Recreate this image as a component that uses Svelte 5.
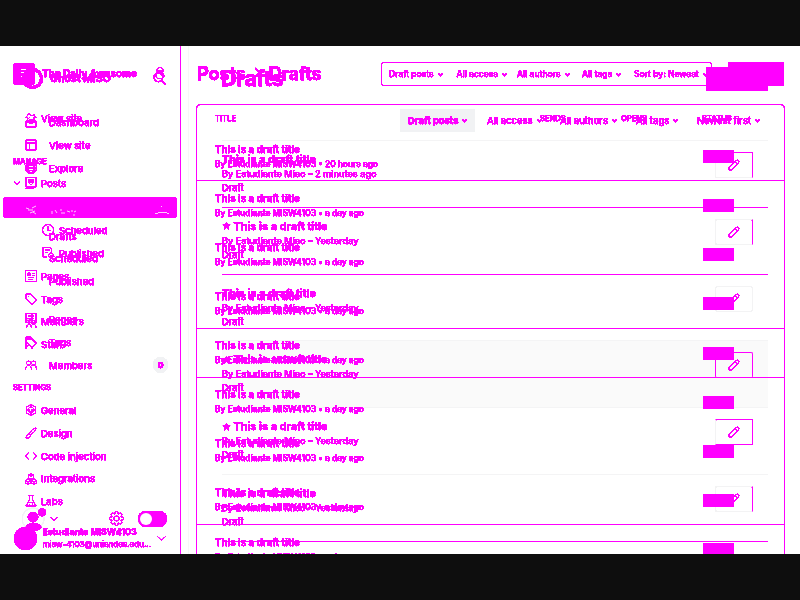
<script>
  const icons = {
    search: 'M10 3a7 7 0 1 0 .1 0M15.5 15.5L22 22',
    person: 'M12 1a6 6 0 1 0 .1 0M5 14a8 7 0 1 0 14 0M5 14c1-4 13-4 14 0M8 8h8',
    home2: 'M1 12L8 3l6 5 4-3 4 7M5 11v10h13V11M9 15h6',
    board: 'M2 10h20v12H2zM2 10l7-7M9 10v5h6v-5',
    site: 'M2 2h20v20H2zM2 8h20M9 8v14',
    globe: 'M12 1a11 11 0 1 0 .1 0M1 12h22M12 1c-8 7-8 15 0 22M12 1c8 7 8 15 0 22M3 7h18M3 17h18',
    posts: 'M2 1h20v19H2zM7 5h10v6l-5 5-5-5zM9 7h6M9 9h6M9 11h6M1 23h17',
    clock: 'M12 1a11 11 0 1 0 .1 0M12 5v8h5',
    pub: 'M2 1h14l3 4v5M2 1v19h8M6 6h9M6 11h6M18 12a5 5 0 1 0 .1 0M15 18l2 2 4-4',
    page: 'M1 1h22v22H1zM6 6h4v5H6zM14 7h5M14 11h5M6 15h12M6 19h9',
    tag: 'M2 2h9l12 12-9 9L2 11zM7 6v2',
    people: 'M7 4a4 4 0 1 0 .1 0M17 4a4 4 0 1 0 .1 0M1 21c0-11 12-11 12 0M12 14c5-5 11-1 11 7',
    members: 'M2 9a4 4 0 1 0 8 0 4 4 0 1 0-8 0M17 9a4 4 0 1 0 .1 0M3 23c2-9 9-9 10 0M13 19c3-5 8-4 9 4M4 14l8-8',
    staff: 'M4 2h9l8 9-7 8-6-6M2 3v18M2 21c0-8 12-8 12 0',
    pages: 'M2 1h20v18H2zM7 6h10M7 11h10M14 1v18M5 15h12',
    gear: 'M12 8a4 4 0 1 0 .1 0M10 1h4l1 4 3-2 3 3-2 3 4 1v4l-4 1 2 3-3 3-3-2-1 4h-4l-1-4-3 2-3-3 2-3-4-1v-4l4-1-2-3 3-3 3 2z',
    hex: 'M12 1l9 5v12l-9 5-9-5V6zM12 6a6 6 0 1 0 .1 0M9 10v3M14 10v3M9 15h6',
    brush: 'M22 2l-6 2-8 9 3 3 9-8zM8 14c-5 0-3 5-7 7 5 3 10 0 10-5',
    code: 'M8 4l-7 8 7 8M16 4l7 8-7 8',
    cubes: 'M12 1l5 3v6l-5 3-5-3V4zM6 12l5 3v5l-5 3-5-3v-5zM18 12l5 3v5l-5 3-5-3v-5zM7 4l5 3 5-3M1 15l5 3 5-3M13 15l5 3 5-3',
    flask: 'M7 1h10M9 1v8L2 22h20L15 9V1M6 15h12M9 19h1M14 18h1',
    pencil: 'M19 2l3 3-3 5L7 22H2v-5L14 5zM14 5l4 4',
    chev: 'M4 8l8 8 8-8'
  };

  const topNav = [['board', 'Dashboard'], ['site', 'View site'], ['globe', 'Explore']];
  const midNav = ['Drafts', 'Scheduled', 'Published'];
  const lowNav = [['pages', 'Pages'], ['tag', 'Tags'], ['people', 'Members']];
  const subNav = [['clock', 'Scheduled'], ['pub', 'Published']];
  const manage = [['page', 'Pages'], ['tag', 'Tags'], ['members', 'Members'], ['staff', 'Staff']];
  const settings = [['hex', 'General'], ['brush', 'Design'], ['code', 'Code injection'], ['cubes', 'Integrations'], ['flask', 'Labs']];

  const oldRows = ['20 hours ago', ...Array(8).fill('a day ago')];
  const softLines = [1, 2, 5, 6];
  const newRows = [
    { when: '2 minutes ago', star: false, box: 't r', line: 'strong' },
    { when: 'Yesterday', star: true, box: 'r', line: 'strong' },
    { when: 'Yesterday', star: false, box: '', line: '' },
    { when: 'Yesterday', star: true, box: 't r l', line: '', hover: true },
    { when: 'Yesterday', star: true, box: 't r b', line: '' },
    { when: 'Yesterday', star: false, box: 'r', line: 'strong' }
  ];
</script>

{#snippet icon(name, size = 12, w = 1.7)}
  <svg width={size} height={size} viewBox="0 0 24 24" fill="none" stroke="#f0f" stroke-width={w}><path d={icons[name]} /></svg>
{/snippet}

<svg class="defs" width="0" height="0">
  <filter id="hard" x="0" y="0" width="100%" height="100%" color-interpolation-filters="sRGB">
    <feComponentTransfer><feFuncA type="linear" slope="20" intercept="-2.5" /></feComponentTransfer>
  </filter>
</svg>

<div class="screen">
  <div class="stage">
    <div class="layer b">
      <aside>
        <div class="head"><i class="ring"></i><b>Ghost MISO</b>{@render icon('search', 15, 1.7)}</div>
        {#each topNav as [ic, label]}<div class="nav">{@render icon(ic)}<span>{label}</span></div>{/each}
        <div class="nav hidden-row"></div>
        {#each midNav as label}<div class="nav sub"><span>{label}</span></div>{/each}
        <div class="gap"></div>
        {#each lowNav as [ic, label]}
          <div class="nav">{@render icon(ic)}<span>{label}</span>{#if label === 'Members'}<em><b>0</b></em>{/if}</div>
        {/each}
        <div class="foot">
          <svg class="face" width="28" height="34" viewBox="0 0 28 34"><circle cx="11" cy="17" r="11" fill="none" stroke="#f3f3f5" /><circle cx="11" cy="15" r="5.300" /><ellipse cx="11.500" cy="25" rx="8" ry="4" /><circle cx="20" cy="10.300" r="4" /></svg>
          <span class="fchev">{@render icon('chev', 10, 2)}</span>
          <span class="fgear">{@render icon('gear', 15, 1.2)}</span>
          <span class="toggle"><i></i></span>
        </div>
      </aside>
      <main>
        <header><h1>Drafts</h1><button aria-label="New post"></button></header>
        <div class="filters">
          <span class="on"><b>Draft posts</b> {@render icon('chev', 7, 4)}</span>
          <span class="f2">All access {@render icon('chev', 7, 4)}</span>
          <span class="f3">All authors {@render icon('chev', 7, 4)}</span>
          <span class="f4">All tags {@render icon('chev', 7, 4)}</span>
          <span class="f5">Newest first {@render icon('chev', 7, 4)}</span>
        </div>
        {#each newRows as r}
          <div class="row {r.line}" class:hover={r.hover}>
            <div class="txt">
              <h3>{#if r.star}<svg width="9" height="9" viewBox="0 0 24 24"><path fill="#f0f" d="M12 1l3 8h8l-6 5 2 9-7-5-7 5 2-9-6-5h8z" /></svg>{/if}<span>This is a draft title</span></h3>
              <p>By Estudiante Miso – {r.when}</p>
              <small>Draft</small>
            </div>
            <div class="edit {r.box}">{@render icon('pencil', 12, 2)}</div>
          </div>
        {/each}
      </main>
    </div>

    <div class="layer a">
      <aside>
        <div class="head">
          <svg class="logo" width="22" height="22" viewBox="0 0 22 22"><path fill="#f0f" fill-rule="evenodd" d="M2 0h18l2 2v18l-2 2H2l-2-2V2zM8 6v1h5v-1zM8 9v1h3v-1zM8 13v1h2v-1z" /></svg>
          <b>The Daily Awesome</b>{@render icon('person', 12, 1.500)}
        </div>
        <div class="nav">{@render icon('home2')}<span>View site</span></div>
        <div class="section">MANAGE</div>
        <div class="nav posts"><i>{@render icon('chev', 8, 3)}</i>{@render icon('posts')}<span>Posts</span></div>
        <div class="bar">
          <svg width="174" height="21" viewBox="0 0 174 21" fill="none" stroke="#fff" stroke-width=".8"><path d="M23 11l3 1M25 13h5M29 11l4 -2M27 16l5-2M30 15l3 2M49 14v3M52 13l2 3M57 13h2M58 16h4M64 14l3 1M69 13v2M71 15l2-1M72 18h-2M152 16.500h3M155 15.500h9M164 16.500h2M158.500 9v1" /></svg>
        </div>
        {#each subNav as [ic, label]}<div class="nav sub">{@render icon(ic, 12)}<span>{label}</span></div>{/each}
        {#each manage as [ic, label]}<div class="nav">{@render icon(ic)}<span>{label}</span></div>{/each}
        <div class="section low">SETTINGS</div>
        {#each settings as [ic, label]}<div class="nav">{@render icon(ic)}<span>{label}</span></div>{/each}
        <div class="user"><i></i><div><b>Estudiante MISW4103</b><span>misw-4103@uniandes.edu...</span></div>{@render icon('chev', 11, 2)}</div>
      </aside>
      <main>
        <header>
          <h1>Posts {@render icon('chev', 13, 3)} Drafts</h1>
          <div class="filters">
            <span class="f1">Draft posts {@render icon('chev', 7, 4)}</span>
            <span class="f2">All access {@render icon('chev', 7, 4)}</span>
            <span class="f3">All authors {@render icon('chev', 7, 4)}</span>
            <span class="f4">All tags {@render icon('chev', 7, 4)}</span>
            <span class="f5">Sort by: Newest {@render icon('chev', 7, 4)}</span>
          </div>
          <button aria-label="New post"></button>
        </header>
        <section class="table">
          <div class="cols"><span>TITLE</span><span>SENDS</span><span>OPENS</span><span>STATUS</span></div>
          {#each oldRows as when, i}
            <div class="row" class:soft={softLines.includes(i)}>
              <div class="txt"><h3>This is a draft title</h3><p>By <b>Estudiante MISW4103</b> • {when}</p></div>
              <i class="badge"></i>
            </div>
          {/each}
        </section>
      </main>
    </div>
  </div>
</div>

<style>
  :global(body) { margin: 0; background: #0e0e0e; }
  .defs { position: absolute; }
  .screen { width: 800px; height: 600px; box-sizing: border-box; padding: 46px 0; overflow: hidden; background: #0e0e0e; font-family: Inter, "Noto Sans", sans-serif; color: #f0f; -webkit-text-stroke: .25px #f0f; }
  .stage { position: relative; height: 508px; background: #fff; overflow: hidden; }
  .layer { position: absolute; inset: 0; display: flex; overflow: hidden; filter: url(#hard); }
  .layer * { box-sizing: border-box; white-space: nowrap; }
  .hover .txt, .hover svg, .on b, .on svg, em b { filter: url(#hard); }
  svg { display: block; flex: none; }
  h1, h3, p { margin: 0; }
  aside { flex: none; height: 508px; }
  i { font-style: normal; }
  .nav, .head, .foot, .user { display: flex; align-items: center; }
  button { border: 0; padding: 0; background: #f0f; border-radius: 2px; }

  .a aside { width: 181px; border-right: 1px solid #f0f; }
  .a .head { height: 24px; margin: 16px 0 20.500px; padding: 0 14px 0 13px; font-size: 9.900px; }
  .a .head b { flex: 1; margin: -2px 0 0 7px; }
  .a .head svg:last-child { margin-top: -2px; }
  .logo { margin-top: -1px; }
  .a .nav { height: 22.800px; padding-left: 25px; gap: 4px; font-size: 9.500px; font-weight: 500; }
  .a .nav span { padding-top: .6px; }
  .a .posts { padding-left: 13px; }
  .a .posts i { width: 8px; }
  .a .sub { padding-left: 42px; gap: 5px; }
  .section { height: 42.500px; padding: 28px 0 0 13px; font-size: 7.600px; line-height: 9px; font-weight: 600; }
  .low { height: 43px; padding-top: 27px; }
  .bar { height: 21px; margin: 2px 3px 1.500px; background: #f0f; border-radius: 3px; }
  .user { height: 41px; padding: 10px 13px 0 14px; }
  .user > i { flex: none; width: 23px; height: 23px; border-radius: 50%; background: #f0f; }
  .user div { flex: 1; min-width: 0; margin: -1px 0 0 5.500px; display: flex; flex-direction: column; font-size: 8.800px; line-height: 12px; }
  .user div span { font-size: 8.100px; letter-spacing: -.08px; font-weight: 500; }
  .a main { width: 589px; margin-left: 15px; }
  .a header { height: 58px; padding-top: 16px; display: flex; align-items: flex-start; }
  .a h1 { width: 185px; height: 23px; padding-left: 1px; font-size: 18.300px; line-height: 23px; display: flex; align-items: center; gap: 5px; letter-spacing: -.25px; }
  .a h1 svg { transform: rotate(-90deg); margin-top: -3px; }
  .a .filters { width: 331px; height: 24px; border: 1px solid #f0f; border-radius: 2px; display: flex; align-items: center; font-size: 8.500px; font-weight: 500; padding-left: 7px; }
  .filters span { display: flex; align-items: center; gap: 3px; flex: none; }
  .a .f1 { width: 67.500px; } .a .f2 { width: 60.500px; } .a .f3 { width: 65px; } .a .f4 { width: 52px; }
  .a button { width: 56px; height: 24px; margin-left: 16px; }
  .table { border: 1px solid #f0f; border-radius: 4px; height: 460px; overflow: hidden; }
  .cols { height: 27px; padding: 9px 0 0 18px; display: flex; font-size: 7.600px; line-height: 9px; font-weight: 600; }
  .cols span:nth-child(1) { width: 325px; } .cols span:nth-child(2) { width: 81px; } .cols span:nth-child(3) { width: 81px; }
  .a .row { height: 49.150px; padding: 9.500px 50px 0 18px; border-bottom: 1px solid #f0f; display: flex; justify-content: space-between; }
  .a .soft { border-color: transparent; }
  .a h3 { font-size: 9.900px; line-height: 14px; font-weight: 600; }
  .a p { margin-top: 1px; font-size: 8.400px; line-height: 15px; font-weight: 500; }
  .a p b { font-weight: 600; }
  .badge { width: 31px; height: 13px; margin-top: 8.500px; background: #f0f; border-radius: 1px; }

  .b aside { width: 189px; border-right: 1px solid #f7f7f7; }
  .b .head { height: 24px; margin: 20px 0 21px; padding: 0 19px 0 22px; font-size: 10.500px; }
  .b .head b { flex: 1; margin-left: 7px; }
  .ring { width: 21px; height: 21px; border: 3px solid #f0f; border-radius: 50%; }
  .b .head svg { margin-right: 2px; }
  .b .nav { height: 22.850px; padding: 0 20px 0 25px; gap: 12px; font-size: 9.600px; font-weight: 500; }
  .b .nav span { flex: 1; padding-top: .4px; }
  .b .sub { padding-left: 49px; }
  .b .hidden-row { height: 45px; }
  .b em { width: 15px; height: 16px; border-radius: 50%; background: #f1f2f4; font: 600 8px/16px Inter, sans-serif; text-align: center; }
  .b em b { display: block; }
  .gap { height: 15px; }
  .foot { height: 34px; margin-top: 125px; padding-left: 22px; }
  .face { fill: #f0f; }
  .fchev { margin-left: -1px; } .fgear { margin-left: 50px; }
  .toggle { width: 29px; height: 16px; margin-left: 14px; border-radius: 8px; background: #f0f; padding: 2px; }
  .toggle i { display: block; width: 12px; height: 12px; border-radius: 50%; background: #fff; }
  .b main { width: 546px; margin-left: 33px; }
  .b header { height: 63px; padding-top: 21px; display: flex; justify-content: space-between; }
  .b h1 { margin: -1px 0 0 -1px; font-size: 21.500px; line-height: 24px; letter-spacing: -.3px; }
  .b button { width: 62px; height: 24px; }
  .b .filters { height: 32px; border-bottom: 1px solid #f4f4f5; padding-left: 178px; display: flex; align-items: flex-start; font-size: 9.400px; font-weight: 500; }
  .b .filters span { height: 23px; }
  .b .on { width: 75px; margin-right: 12px; padding-left: 8px; background: #f1f2f4; border-radius: 2px; }
  .b .f2 { width: 73px; } .b .f3 { width: 76px; } .b .f4 { width: 61px; }
  .b .row { height: 66.750px; border-bottom: 1px solid #f4f4f5; display: flex; justify-content: space-between; padding: 11px 15px 0 0; }
  .b .strong { border-color: #f0f; }
  .b .hover { background: #fafafa; }
  .b h3 { height: 14px; margin-bottom: 1px; display: flex; align-items: center; gap: 2.500px; font-size: 10.950px; font-weight: 600; }
  .b p { font-size: 9.170px; line-height: 14px; font-weight: 500; }
  small { display: block; font-size: 9.300px; line-height: 14px; font-weight: 500; }
  .edit { width: 38px; height: 26px; border: 1px solid #f3f3f4; border-radius: 2px; display: flex; align-items: center; justify-content: center; }
  .t { border-top-color: #f0f; } .r { border-right-color: #f0f; } .l { border-left-color: #f0f; } .edit.b { border-bottom-color: #f0f; }
</style>
